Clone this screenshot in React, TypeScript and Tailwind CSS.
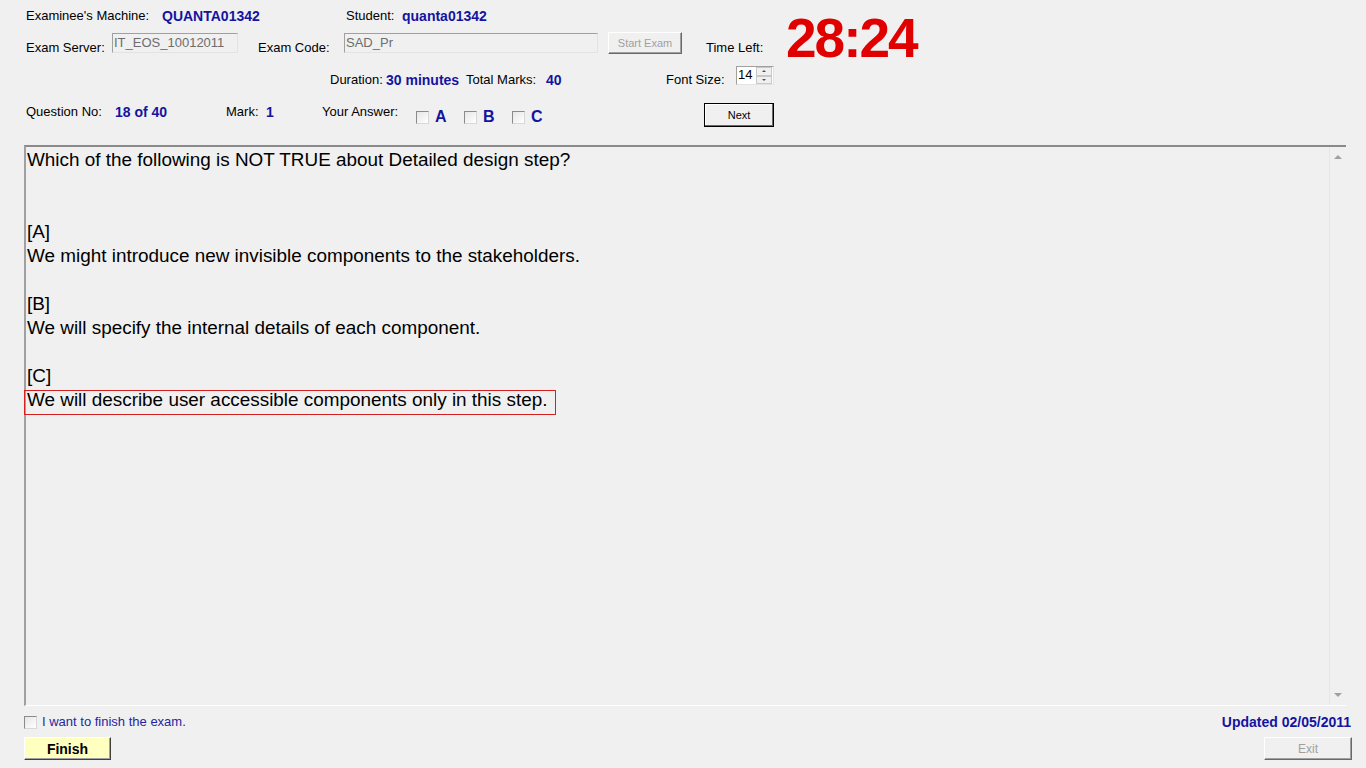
import type { ReactNode } from 'react'

const value = 'text-[14px] font-bold text-[#1414a0]'

function Sunken({ children, className = '' }: { children: ReactNode; className?: string }) {
  return (
    <div
      className={`mt-[1px] h-[20px] border border-t-[#a0a0a0] border-l-[#a0a0a0] border-b-[#e3e3e3] border-r-[#e3e3e3] bg-[#f0f0f0] pl-[1px] pt-[1px] text-[13px] leading-[16px] text-[#6d6d6d] ${className}`}
    >
      {children}
    </div>
  )
}

function Checkbox() {
  return (
    <span className="inline-block w-[13px] h-[13px] shrink-0 border border-t-[#8a8a8a] border-l-[#8a8a8a] border-b-[#d8d8d8] border-r-[#d8d8d8] bg-gradient-to-br from-[#e6e6e6] to-white" />
  )
}

function Spinner() {
  return (
    <div className="flex w-[38px] h-[19px] border border-t-[#a0a0a0] border-l-[#a0a0a0] border-b-[#e3e3e3] border-r-[#e3e3e3] bg-white">
      <span className="flex-1 pl-[1px] text-[13px] leading-[15px]">14</span>
      <div className="flex flex-col w-[16px] mr-[1px]">
        <div className="flex-1 flex items-center justify-center border border-[#c8c8c8] bg-[#f0f0f0]">
          <span className="w-0 h-0 border-x-[2px] border-x-transparent border-b-[2px] border-b-[#505050]" />
        </div>
        <div className="flex-1 flex items-center justify-center border border-[#c8c8c8] bg-[#f0f0f0]">
          <span className="w-0 h-0 border-x-[2px] border-x-transparent border-t-[2px] border-t-[#505050]" />
        </div>
      </div>
    </div>
  )
}

export default function App() {
  return (
    <div className="w-[1366px] h-[768px] overflow-hidden bg-[#f0f0f0] text-[13px] leading-[16px] text-black font-['Liberation_Sans',Arial,sans-serif]">
      {/* header: machine / server / timer */}
      <div className="flex h-[66px] pl-[26px]">
        <div className="w-[760px]">
          <div className="flex items-center h-[16px] mt-[8px]">
            <span className="w-[136px]">Examinee's Machine:</span>
            <span className={`w-[184px] ${value}`}>QUANTA01342</span>
            <span className="w-[56px]">Student:</span>
            <span className={value}>quanta01342</span>
          </div>
          <div className="flex items-start mt-[8px]">
            <span className="w-[86px] mt-[8px]">Exam Server:</span>
            <Sunken className="w-[126px]">IT_EOS_10012011</Sunken>
            <span className="w-[86px] ml-[20px] mt-[8px]">Exam Code:</span>
            <Sunken className="w-[254px]">SAD_Pr</Sunken>
            <button
              disabled
              className="ml-[10px] w-[74px] h-[22px] border border-t-white border-l-white border-b-[#696969] border-r-[#696969] shadow-[inset_-1px_-1px_0_#a0a0a0] bg-[#f0f0f0] text-[11px] text-[#a0a0a0]"
            >
              Start Exam
            </button>
            <span className="ml-[24px] mt-[8px]">Time Left:</span>
          </div>
        </div>
        <div className="mt-[11px] text-[55px] leading-none font-bold tracking-[-2px] text-[#e00000]">
          28:24
        </div>
      </div>

      {/* duration / font size */}
      <div className="flex items-start h-[20px] pl-[330px]">
        <span className="w-[56px] mt-[6px]">Duration:</span>
        <span className={`w-[80px] mt-[6px] ${value}`}>30 minutes</span>
        <span className="w-[80px] mt-[6px]">Total Marks:</span>
        <span className={`w-[120px] mt-[6px] ${value}`}>40</span>
        <span className="w-[70px] mt-[6px]">Font Size:</span>
        <Spinner />
      </div>

      {/* question no / answers */}
      <div className="flex items-start h-[24px] mt-[17px] pl-[26px]">
        <span className="w-[89px] mt-[1px]">Question No:</span>
        <span className={`w-[111px] mt-[1px] ${value}`}>18 of 40</span>
        <span className="w-[40px] mt-[1px]">Mark:</span>
        <span className={`w-[56px] mt-[1px] ${value}`}>1</span>
        <span className="w-[94px] mt-[1px]">Your Answer:</span>
        {['A', 'B', 'C'].map((l) => (
          <div key={l} className="flex items-center w-[48px] mt-[6px]">
            <Checkbox />
            <span className="ml-[6px] text-[16px] leading-[16px] font-bold text-[#1414a0]">{l}</span>
          </div>
        ))}
        <button className="ml-[144px] w-[70px] h-[24px] border border-black shadow-[inset_-1px_-1px_0_#696969,inset_1px_1px_0_#fff] bg-[#f0f0f0] text-[11px]">
          Next
        </button>
      </div>

      {/* question text */}
      <div className="flex ml-[24px] mt-[18px] w-[1322px] h-[561px] border-t-2 border-l-2 border-t-[#8a8a8a] border-l-[#a0a0a0] border-b border-b-white">
        <div className="flex-1 pl-[1px] pt-[1px] text-[18.9px] leading-[24px]">
          <p>Which of the following is NOT TRUE about Detailed design step?</p>
          <p>&nbsp;</p>
          <p>&nbsp;</p>
          <p>[A]</p>
          <p>We might introduce new invisible components to the stakeholders.</p>
          <p>&nbsp;</p>
          <p>[B]</p>
          <p>We will specify the internal details of each component.</p>
          <p>&nbsp;</p>
          <p>[C]</p>
          <p className="inline-block -ml-[3px] mt-[2px] pl-[2px] pr-[8px] pb-[5px] leading-[18px] border border-[#d42020]">
            We will describe user accessible components only in this step.
          </p>
        </div>
        <div className="flex flex-col justify-between items-center w-[17px] border-l border-l-[#e6e6e6] py-[8px]">
          <span className="w-0 h-0 border-x-[4px] border-x-transparent border-b-[4px] border-b-[#a0a0a0]" />
          <span className="w-0 h-0 border-x-[4px] border-x-transparent border-t-[4px] border-t-[#a0a0a0]" />
        </div>
      </div>

      {/* footer */}
      <div className="flex items-center justify-between h-[16px] mt-[8px] pl-[24px] pr-[15px]">
        <div className="flex items-center">
          <Checkbox />
          <span className="ml-[5px] text-[#2626a0]">I want to finish the exam.</span>
        </div>
        <span className={value}>Updated 02/05/2011</span>
      </div>
      <div className="flex justify-between mt-[7px] pl-[24px] pr-[14px]">
        <button className="w-[87px] h-[23px] border border-t-white border-l-white border-b-[#404040] border-r-[#404040] shadow-[inset_-1px_-1px_0_#a0a0a0] bg-[#ffffc0] text-[14px] font-bold">
          Finish
        </button>
        <button
          disabled
          className="w-[88px] h-[23px] border border-t-white border-l-white border-b-[#696969] border-r-[#696969] shadow-[inset_-1px_-1px_0_#a0a0a0] bg-[#f0f0f0] text-[12px] text-[#a0a0a0]"
        >
          Exit
        </button>
      </div>
    </div>
  )
}
